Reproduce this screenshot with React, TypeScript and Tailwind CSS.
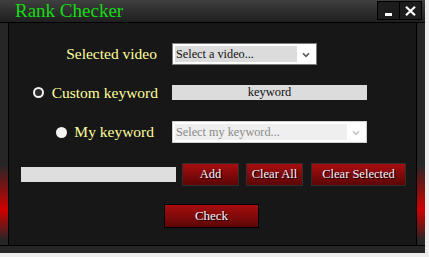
import React from "react";

function Chevron({ color }: { color: string }) {
  return (
    <svg width="8" height="6" viewBox="0 0 8 6" className="block">
      <path d="M1 1.2 L4 4.4 L7 1.2" fill="none" stroke={color} strokeWidth="1.6" />
    </svg>
  );
}

function RedButton({ label, w, dark }: { label: string; w: string; dark?: boolean }) {
  return (
    <div
      className={
        "h-full flex items-center justify-center text-[12.5px] text-[#f4f2ff] [text-shadow:1px_1px_0_#000] bg-[linear-gradient(to_bottom,#a80d0d,#5c0606)] border " +
        (dark ? "border-black " : "border-[#2e2e2e] ") +
        w
      }
    >
      {label}
    </div>
  );
}

export default function App() {
  return (
    <div className="w-[429px] h-[257px] bg-[#eeeeee] font-['Liberation_Serif',serif]">
      <div className="w-[425px] h-[253px] bg-[#262626] flex flex-col">
        {/* Title bar */}
        <div className="h-[23px] flex items-start border-b border-black bg-[linear-gradient(to_bottom,#3f3f3f,#1f1f1f)]">
          <div className="pl-[15px] pt-[1px] text-[19px] leading-[20px] text-[#14dc14]">Rank Checker</div>
          <div className="ml-auto mt-[1px] mr-[3px] flex">
            <div className="w-[23px] h-[19px] border border-black bg-[#1c1c1c] flex items-end justify-center pb-[3px]">
              <div className="w-[7px] h-[3px] bg-white" />
            </div>
            <div className="w-[22px] h-[19px] border border-l-0 border-black bg-[#1c1c1c] flex items-center justify-center">
              <svg width="11" height="10" viewBox="0 0 11 10">
                <path d="M1 0.8 L10 9.2 M10 0.8 L1 9.2" stroke="#fff" strokeWidth="2.2" fill="none" />
              </svg>
            </div>
          </div>
        </div>

        {/* Body */}
        <div className="h-[222px] flex">
          <div className="w-[9px] border-r border-black flex flex-col">
            <div className="flex-1" />
            <div className="h-[75px] mb-[5px] bg-[linear-gradient(to_bottom,rgba(204,0,0,0),#d00000_60%,rgba(204,0,0,0))]" />
          </div>

          <div className="flex-1 bg-[#171717] flex flex-col">
            {/* Row 1 */}
            <div className="mt-[20px] h-[22px] flex items-center">
              <div className="w-[163px] flex justify-end items-center pr-[15px] text-[15.5px] text-[#ffff9c] leading-none">
                Selected video
              </div>
              <div className="w-[145px] h-[22px] border border-[#7c7c7c] bg-white p-[2px] flex items-stretch">
                <div className="w-[122px] bg-[#dcdcdc] flex items-center pl-[1px] text-[12.25px] text-[#111] leading-none">
                  Select a video...
                </div>
                <div className="flex-1 flex items-center justify-center pt-[2px]">
                  <Chevron color="#555" />
                </div>
              </div>
            </div>

            {/* Row 2 */}
            <div className="mt-[16px] h-[23px] flex items-center">
              <div className="w-[163px] flex justify-end items-center pr-[14px] text-[15.5px] text-[#ffff9c] leading-none">
                <div className="w-[11px] h-[11px] rounded-full border-[2.5px] border-[#f2f2f2] bg-[#2a2a2a] mr-[8px]" />
                Custom keyword
              </div>
              <div className="w-[195px] h-[15px] bg-[#dcdcdc] flex items-center justify-center text-[12.5px] text-[#111] leading-none">
                keyword
              </div>
            </div>

            {/* Row 3 */}
            <div className="mt-[17px] h-[22px] flex items-center">
              <div className="w-[163px] flex justify-end items-center pr-[18px] text-[15.5px] text-[#ffff9c] leading-none">
                <div className="w-[11px] h-[11px] rounded-full bg-[#f4f4f4] mr-[7px]" />
                My keyword
              </div>
              <div className="w-[195px] h-[22px] border border-[#cfcfcf] bg-white p-[2px] flex items-stretch">
                <div className="w-[172px] bg-[#efefef] flex items-center pl-[1px] text-[12.25px] text-[#8a8a8a] leading-none">
                  Select my keyword...
                </div>
                <div className="flex-1 flex items-center justify-center pt-[2px]">
                  <Chevron color="#c4c4c4" />
                </div>
              </div>
            </div>

            {/* Row 4 */}
            <div className="mt-[20px] h-[23px] flex items-center pl-[12px]">
              <div className="w-[155px] h-[15px] bg-[#dedede]" />
              <div className="ml-[6px] h-full">
                <RedButton label="Add" w="w-[57px]" />
              </div>
              <div className="ml-[7px] h-full">
                <RedButton label="Clear All" w="w-[57px]" />
              </div>
              <div className="ml-[8px] h-full">
                <RedButton label="Clear Selected" w="w-[95px]" />
              </div>
            </div>

            {/* Row 5 */}
            <div className="mt-[18px] h-[24px] flex pl-[155px]">
              <div className="h-full">
                <div className="h-full w-[95px] flex items-center justify-center text-[13px] text-[#f4f2ff] [text-shadow:1px_1px_0_#000] bg-[linear-gradient(to_bottom,#a80d0d,#5c0606)] border border-black">
                  Check
                </div>
              </div>
            </div>
          </div>

          <div className="w-[9px] border-l border-black flex flex-col">
            <div className="flex-1" />
            <div className="h-[75px] mb-[5px] bg-[linear-gradient(to_bottom,rgba(204,0,0,0),#d00000_60%,rgba(204,0,0,0))]" />
          </div>
        </div>

        {/* Bottom frame */}
        <div className="h-[8px] border-t border-black bg-[#262626]" />
      </div>
    </div>
  );
}
